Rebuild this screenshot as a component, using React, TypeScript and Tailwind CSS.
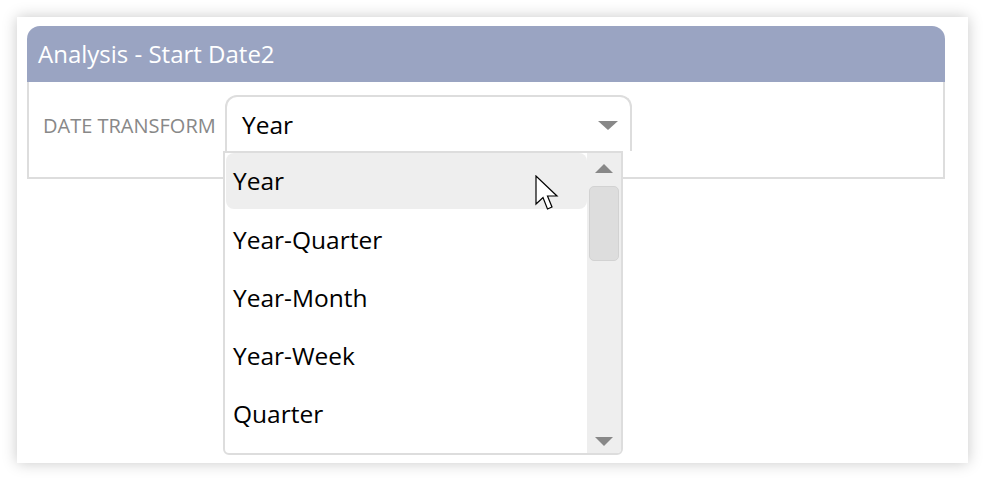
import React from "react";

const options = ["Year", "Year-Quarter", "Year-Month", "Year-Week", "Quarter"];

function Cursor() {
    return (
        <svg className="absolute left-[535px] top-[175px]" width="28" height="40" viewBox="0 0 28 40">
            <path
                d="M1 1 L1 29 L8 22.5 L12.5 34 L17 32 L12.5 21 L22 21 Z"
                fill="#fff"
                stroke="#000"
                strokeWidth="1.2"
                strokeLinejoin="miter"
            />
        </svg>
    );
}

export default function App() {
    return (
        <div className="w-[985px] h-[480px] bg-white pt-[17px] pl-[17px] relative overflow-hidden" style={{ fontFamily: '"Open Sans", "Noto Sans", sans-serif' }}>
            <div className="w-[951px] h-[446px] bg-white shadow-[0_0_14px_rgba(0,0,0,0.22)] pt-[9px] pl-[10px]">
                <div className="w-[918px]">
                    {/* Header */}
                    <div className="h-[56px] bg-[#9aa4c2] rounded-t-[13px] pl-[11px] pr-[12px] flex items-center">
                        <span className="text-white text-[24px] leading-none">Analysis - Start Date2</span>
                    </div>

                    {/* Body */}
                    <div className="h-[97px] border-2 border-t-0 border-[#dddddd] flex items-start pt-[13px] pl-[14px]">
                        <span className="text-[#888888] text-[20px] uppercase mt-[16px] w-[182px]">Date Transform</span>
                        <div className="w-[407px] h-[56px] border-2 border-b-0 border-[#dddddd] rounded-t-[12px] flex items-center pl-[15px] pr-[12px] bg-white">
                            <span className="text-black text-[24.5px] flex-1 mt-[3px]">Year</span>
                            <span className="w-0 h-0 border-l-[10px] border-r-[10px] border-t-[9px] border-l-transparent border-r-transparent border-t-[#888888] mt-[2px]" />
                        </div>
                    </div>
                </div>
            </div>

            {/* Dropdown list */}
            <div className="absolute left-[223px] top-[151px] w-[400px] h-[304px] border-2 border-[#dddddd] rounded-b-[6px] bg-white flex overflow-hidden">
                <div className="flex-1 pl-[1px]">
                    {options.map((o, i) => (
                        <div
                            key={o}
                            className={
                                i === 0
                                    ? "h-[56px] mb-[2px] rounded-[8px] bg-[#eeeeee] flex items-center pl-[7px] text-black text-[24.5px]"
                                    : "h-[58px] flex items-center pl-[7px] text-black text-[24.5px]"
                            }
                        >
                            {o}
                        </div>
                    ))}
                </div>
                <div className="w-[34px] bg-[#eeeeee] flex flex-col items-center pt-[11px]">
                    <span className="w-0 h-0 border-l-[9px] border-r-[9px] border-b-[9px] border-l-transparent border-r-transparent border-b-[#888888]" />
                    <div className="w-[30px] h-[75px] mt-[13px] bg-[#dddddd] border border-[#d2d2d2] rounded-[5px]" />
                    <div className="flex-1" />
                    <span className="w-0 h-0 border-l-[9px] border-r-[9px] border-t-[9px] border-l-transparent border-r-transparent border-t-[#888888] mb-[7px]" />
                </div>
            </div>

            <Cursor />
        </div>
    );
}
